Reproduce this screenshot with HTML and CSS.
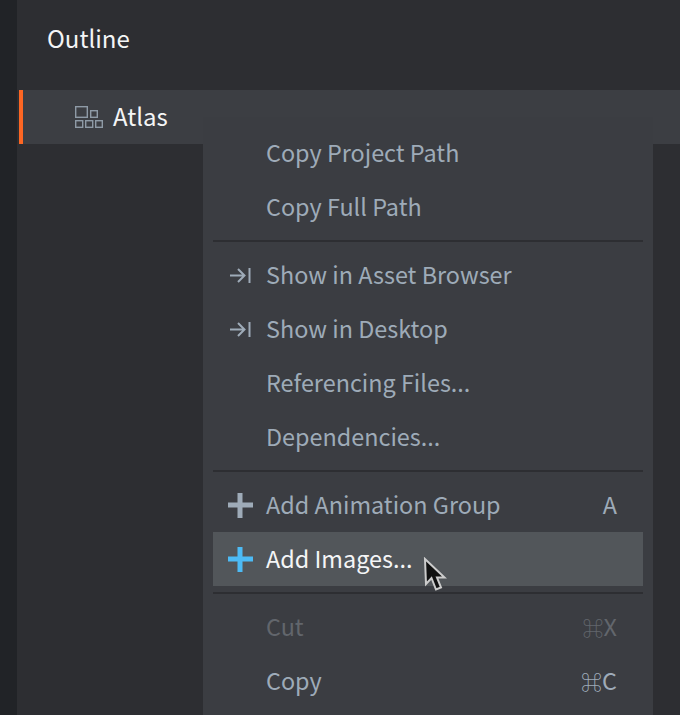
FILE: index.html
```html
<!DOCTYPE html>
<html>
<head>
  <title>Outline</title>
  <meta name="viewport" content="width=device-width, initial-scale=1.0">
  <link rel="stylesheet" href="styles.css">
</head>
<body>
  <div id="app">
    <div id="sidebar-strip"></div>
    <div id="outline">
      <div id="outline-title">Outline</div>
      <div id="outline-row">
        <svg class="atlas-icon" width="28" height="22" viewBox="0 0 28 22" fill="none" stroke="#8e9aa6" stroke-width="1.4">
          <rect x="0.7" y="0.7" width="11.6" height="10.6"/>
          <rect x="15.7" y="4.7" width="6.6" height="6.600"/>
          <rect x="0.7" y="14.700" width="7" height="6.600"/>
          <rect x="10.7" y="14.700" width="7" height="6.600"/>
          <rect x="20.7" y="14.700" width="6.600" height="6.600"/>
        </svg>
        <span>Atlas</span>
      </div>

      <div id="context-menu">
        <div class="menu-item"><span class="item-icon"></span><span class="item-label">Copy Project Path</span></div>
        <div class="menu-item"><span class="item-icon"></span><span class="item-label">Copy Full Path</span></div>
        <div class="menu-separator"></div>
        <div class="menu-item">
          <span class="item-icon">
            <svg class="arrow-icon" width="21" height="17" viewBox="0 0 21 17" fill="none" stroke="#9eabb8" stroke-width="2">
              <path d="M0 8.500H14M8 2L14.500 8.500L8 15"/>
              <path d="M19.500 1V16"/>
            </svg>
          </span>
          <span class="item-label">Show in Asset Browser</span>
        </div>
        <div class="menu-item">
          <span class="item-icon">
            <svg class="arrow-icon" width="21" height="17" viewBox="0 0 21 17" fill="none" stroke="#9eabb8" stroke-width="2">
              <path d="M0 8.500H14M8 2L14.500 8.500L8 15"/>
              <path d="M19.500 1V16"/>
            </svg>
          </span>
          <span class="item-label">Show in Desktop</span>
        </div>
        <div class="menu-item"><span class="item-icon"></span><span class="item-label">Referencing Files...</span></div>
        <div class="menu-item"><span class="item-icon"></span><span class="item-label">Dependencies...</span></div>
        <div class="menu-separator"></div>
        <div class="menu-item">
          <span class="item-icon">
            <svg width="26" height="26" viewBox="0 0 26 26" fill="#9eabb8"><path d="M10.500 1H15.500V10.500H26V15.500H15.500V26H10.500V15.500H1V10.500H10.500Z"/></svg>
          </span>
          <span class="item-label">Add Animation Group</span>
          <span class="item-shortcut">A</span>
        </div>
        <div class="menu-item active">
          <span class="item-icon">
            <svg width="26" height="26" viewBox="0 0 26 26" fill="#4dbbf5"><path d="M10.500 1H15.500V10.500H26V15.500H15.500V26H10.500V15.500H1V10.500H10.500Z"/></svg>
          </span>
          <span class="item-label">Add Images...</span>
        </div>
        <div class="menu-separator"></div>
        <div class="menu-item disabled"><span class="item-icon"></span><span class="item-label">Cut</span><span class="item-shortcut"><span class="cmd-key">⌘</span>X</span></div>
        <div class="menu-item"><span class="item-icon"></span><span class="item-label">Copy</span><span class="item-shortcut"><span class="cmd-key">⌘</span>C</span></div>
      </div>

      <svg id="cursor" width="26" height="36" viewBox="0 0 26 36">
        <path d="M2 2L3 27L8.500 21L13 32.500L18 30.500L14 20.500H21.500Z" fill="#111" stroke="#ccc" stroke-width="2"/>
      </svg>
    </div>
  </div>
</body>
</html>
```

FILE: styles.css
```css
html, body {
  margin: 0;
  padding: 0;
  height: 100%;
  overflow: hidden;
}
body {
  font-family: "Noto Sans CJK JP", "Noto Sans", "DejaVu Sans", sans-serif;
  font-size: 24px;
  background-color: #2d2e32;
}
#app {
  display: flex;
  height: 715px;
}
#sidebar-strip {
  width: 17px;
  background-color: #212327;
}
#outline {
  position: relative;
  flex: 1;
  padding-left: 2px;
  background-color: #2d2e32;
}
#outline-title {
  height: 90px;
  line-height: 76px;
  padding-left: 28px;
  color: #f4f5f6;
}
#outline-row {
  display: flex;
  align-items: center;
  gap: 10px;
  height: 54px;
  padding-left: 52px;
  border-left: 4px solid #fd6623;
  background-color: #3c3e43;
  color: #f4f5f6;
}
#outline-row span {
  padding-bottom: 4px;
}

/* menu sits over the outline */
#context-menu {
  position: absolute;
  left: 186px;
  top: 117px;
  width: 450px;
  height: 600px;
  padding: 9px 10px 0;
  box-sizing: border-box;
  background-color: #3b3d42;
}
.menu-item {
  display: flex;
  align-items: center;
  height: 54px;
  padding: 0 26px 0 14px;
  font-size: 23.4px;
  color: #9eabb8;
}
.menu-item.active {
  background-color: #52565a;
  color: #f4f5f6;
}
.menu-item.disabled {
  color: #62666c;
}
.item-icon {
  display: flex;
  align-items: center;
  width: 39px;
  flex-shrink: 0;
}
.arrow-icon {
  margin-left: 3px;
}
.item-label, .item-shortcut {
  padding-bottom: 2px;
}
.item-label {
  flex: 1;
}
.cmd-key {
  font-size: 21px;
}
.menu-separator {
  height: 2px;
  margin: 6px 0 6px;
  background-color: #2d2e32;
}
#cursor {
  position: absolute;
  left: 406px;
  top: 557px;
}
```
